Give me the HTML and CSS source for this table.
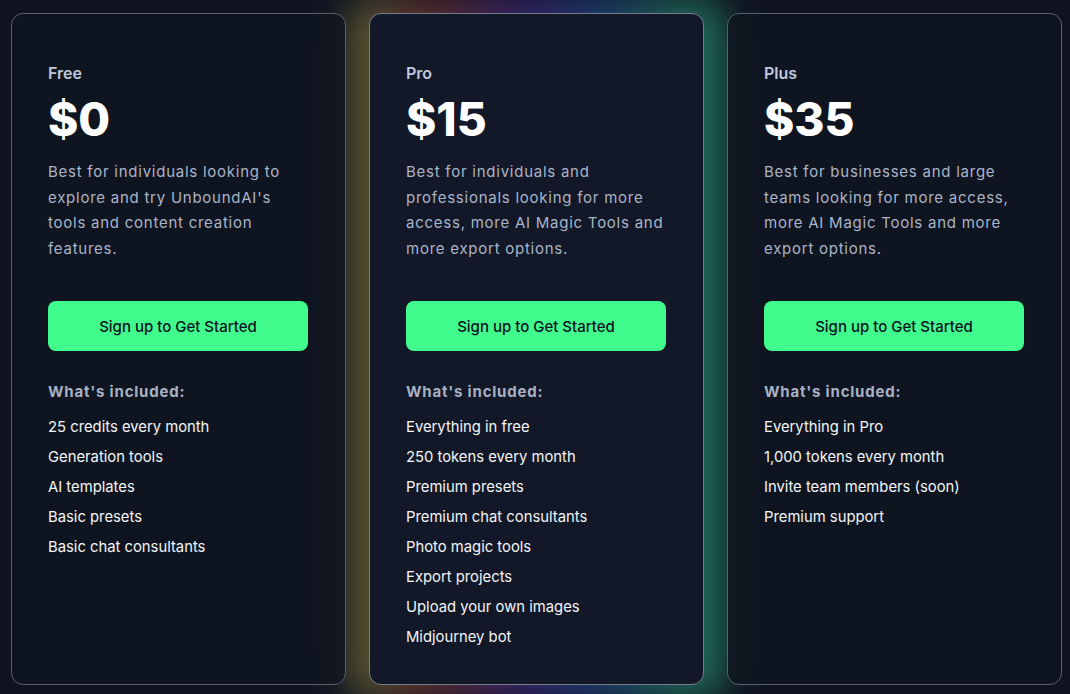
FILE: index.html
```html
<!DOCTYPE html>
<html lang="en">
<head>
<meta charset="utf-8">
<title>Pricing</title>
<link rel="stylesheet" href="styles.css">
</head>
<body>
<main class="pricing">
  <section class="card">
    <h3 class="plan">Free</h3>
    <p class="price">$0</p>
    <p class="desc">Best for individuals looking to explore and try UnboundAI's tools and content creation features.</p>
    <button class="cta">Sign up to Get Started</button>
    <h4 class="incl">What's included:</h4>
    <ul class="features">
      <li>25 credits every month</li>
      <li>Generation tools</li>
      <li>AI templates</li>
      <li>Basic presets</li>
      <li>Basic chat consultants</li>
    </ul>
  </section>
  <section class="card featured">
    <h3 class="plan">Pro</h3>
    <p class="price">$15</p>
    <p class="desc">Best for individuals and professionals looking for more access, more AI Magic Tools and more export options.</p>
    <button class="cta">Sign up to Get Started</button>
    <h4 class="incl">What's included:</h4>
    <ul class="features">
      <li>Everything in free</li>
      <li>250 tokens every month</li>
      <li>Premium presets</li>
      <li>Premium chat consultants</li>
      <li>Photo magic tools</li>
      <li>Export projects</li>
      <li>Upload your own images</li>
      <li>Midjourney bot</li>
    </ul>
  </section>
  <section class="card">
    <h3 class="plan">Plus</h3>
    <p class="price">$35</p>
    <p class="desc">Best for businesses and large teams looking for more access, more AI Magic Tools and more export options.</p>
    <button class="cta">Sign up to Get Started</button>
    <h4 class="incl">What's included:</h4>
    <ul class="features">
      <li>Everything in Pro</li>
      <li>1,000 tokens every month</li>
      <li>Invite team members (soon)</li>
      <li>Premium support</li>
    </ul>
  </section>
</main>
</body>
</html>
```
FILE: styles.css
```css
* { box-sizing: border-box; }
html, body { margin: 0; height: 100%; }
body {
  background: #0f1420;
  font-family: Inter, "Noto Sans", Roboto, sans-serif;
  color: #f1f5f9;
  overflow: hidden;
}
.pricing {
  display: grid;
  grid-template-columns: repeat(3, 335px);
  column-gap: 23px;
  padding: 13px 8px 9px 11px;
  height: 694px;
}
.card {
  border: 1px solid #596171;
  border-radius: 12px;
  background: rgba(16, 21, 32, 0.84);
  padding: 47px 36px 0 36px;
  display: flex;
  flex-direction: column;
  align-items: flex-start;
}
.featured {
  position: relative;
  background: #121827;
  border-color: #747c8b;
}
.featured::before {
  content: "";
  position: absolute;
  inset: -16px -24px;
  z-index: -1;
  border-radius: 28px;
  background: linear-gradient(90deg, #b8c44c 0%, #c84a36 22%, #7038d0 45%, #2f6ee0 66%, #34d8a2 86%, #34d8a2 100%);
  filter: blur(18px);
  opacity: 0.42;
}
.plan {
  margin: 0;
  font-size: 16px;
  line-height: 24px;
  font-weight: 600;
  color: #bfc8dc;
}
.price {
  margin: 10px 0 0;
  font-size: 46px;
  line-height: 48px;
  font-weight: 800;
  color: #ffffff;
}
.desc {
  margin: 16px 0 0;
  font-size: 15px;
  line-height: 25.5px;
  letter-spacing: 0.75px;
  color: #aab4c8;
  max-width: 262px;
}
.cta {
  margin-top: 40px;
  width: 260px;
  height: 50px;
  border: 0;
  border-radius: 8px;
  background: #41fb8d;
  color: #0a1220;
  font-family: Inter, "Noto Sans", sans-serif;
  font-size: 15px;
  font-weight: 550;
  cursor: pointer;
}
.incl {
  margin: 30px 0 0;
  font-size: 15px;
  line-height: 22px;
  font-weight: 700;
  letter-spacing: 0.8px;
  color: #a7b1c4;
}
.features {
  list-style: none;
  margin: 9px 0 0;
  padding: 0;
}
.features li {
  font-size: 14.8px;
  line-height: 30px;
  color: #f3f5f8;
}
```
